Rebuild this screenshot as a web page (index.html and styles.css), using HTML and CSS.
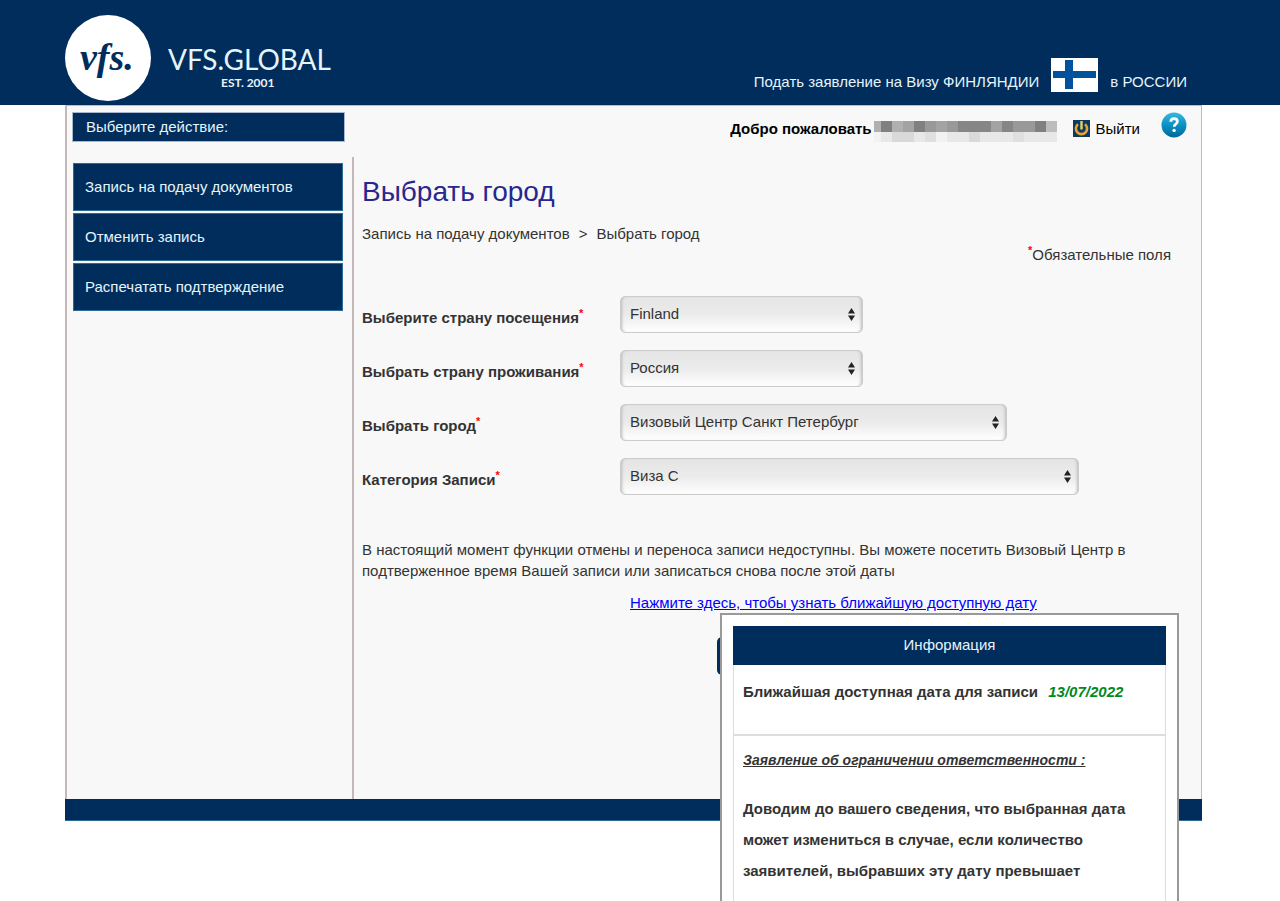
FILE: index.html
```html
<!DOCTYPE html>
<html lang="ru">
<head>
<meta charset="utf-8">
<title>VFS.GLOBAL</title>
<meta name="viewport" content="width=device-width, initial-scale=1">
<link rel="stylesheet" href="styles.css">
</head>
<body>
<div class="page">
  <header class="header">
    <svg class="logo" width="280" height="90" viewBox="0 0 280 90" role="img" aria-label="VFS.GLOBAL EST. 2001">
      <circle cx="43" cy="44" r="43" fill="#fff"/>
      <text class="logo-script" x="15" y="56">vfs.</text>
      <text class="logo-name" x="103" y="56">VFS.GLOBAL</text>
      <text class="logo-est" x="156" y="73">EST. 2001</text>
    </svg>
    <div class="mission">
      <span>Подать заявление на Визу ФИНЛЯНДИИ</span>
      <svg width="47" height="34" viewBox="0 0 47 34" aria-hidden="true">
        <path fill="#fff" d="M0 0h47v34H0z"/>
        <path fill="#00529c" d="M14 2h8v11h23v7H22v11h-8V20H2v-7h12z"/>
      </svg>
      <span>в РОССИИ</span>
    </div>
  </header>

  <div class="panel">
    <div class="topbar">
      <div class="action-title">Выберите действие:</div>
      <div class="user">
        <strong class="welcome">Добро пожаловать</strong>
        <svg class="user-name" width="183" height="21" viewBox="0 0 183 21" shape-rendering="crispEdges" aria-hidden="true">
          <path fill="#b0b0b0" d="M0 0h183v11H0z"/>
          <path fill="#e8e8e8" d="M0 11h183v10H0z"/>
          <path fill="#808080" d="M7 0h11v11H7zM40 0h11v11H40zM161 0h11v11h-11z"/>
          <path fill="#868686" d="M84 0h33v11H84zM128 0h11v11h-11z"/>
          <path fill="#999" d="M51 0h11v11H51zM73 0h11v11H73zM139 0h22v11h-22z"/>
          <path fill="#a3a3a3" d="M29 0h11v11H29zM62 0h11v11H62zM117 0h11v11h-11z"/>
          <path fill="#bdbdbd" d="M172 0h11v11h-11z"/>
          <path fill="#d9d9d9" d="M18 11h22v10H18zM95 11h11v10H95z"/>
          <path fill="#f2f2f2" d="M0 11h7v10H0zM62 11h11v10H62z"/>
          <path fill="#dfdfdf" d="M51 11h11v10H51zM139 11h11v10h-11z"/>
        </svg>
        <a class="logout" href="#">
          <svg width="17" height="17" viewBox="0 0 17 17" aria-hidden="true">
            <path fill="#0d3b5c" d="M0 0h17v17H0z"/>
            <path d="M5 4.200A5.600 5.600 0 1 0 12 4.200" fill="none" stroke="#e8a33a" stroke-width="2.600"/>
            <path d="M8.500 1v8.500" stroke="#e9d35c" stroke-width="2.400"/>
          </svg>
          Выйти
        </a>
        <a class="help" href="#" aria-label="Помощь">
          <svg width="26" height="26" viewBox="0 0 26 26" aria-hidden="true">
            <defs>
              <linearGradient id="ball" x1="0" y1="0" x2="0" y2="1">
                <stop offset="0" stop-color="#35b8dc"/>
                <stop offset=".5" stop-color="#0a92c4"/>
                <stop offset="1" stop-color="#00659b"/>
              </linearGradient>
            </defs>
            <circle cx="13" cy="13" r="12.500" fill="url(#ball)"/>
            <path d="M9.800 9.800C9.800 7.600 11.200 6.600 13 6.600c2 0 3.400 1.100 3.400 2.900 0 2.400-3.200 2.600-3.200 5.200" fill="none" stroke="#fff" stroke-width="2.700"/>
            <circle cx="13.100" cy="18.400" r="1.700" fill="#fff"/>
          </svg>
        </a>
      </div>
    </div>

    <div class="columns">
      <nav class="menu">
        <a href="#">Запись на подачу документов</a>
        <a href="#">Отменить запись</a>
        <a href="#">Распечатать подтверждение</a>
      </nav>
      <main class="content">
        <h1>Выбрать город</h1>
        <div class="crumbs"><span>Запись на подачу документов</span><span>&gt;</span><span>Выбрать город</span></div>
        <div class="required"><sup>*</sup>Обязательные поля</div>
        <form class="form">
          <label for="mission">Выберите страну посещения<sup>*</sup></label>
          <select id="mission" class="short"><option>Finland</option></select>
          <label for="country">Выбрать страну проживания<sup>*</sup></label>
          <select id="country" class="short"><option>Россия</option></select>
          <label for="city">Выбрать город<sup>*</sup></label>
          <select id="city" class="medium"><option>Визовый Центр Санкт Петербург</option></select>
          <label for="category">Категория Записи<sup>*</sup></label>
          <select id="category" class="long"><option>Виза C</option></select>
        </form>
        <p class="note">В настоящий момент функции отмены и переноса записи недоступны. Вы можете посетить Визовый Центр в подтверженное время Вашей записи или записаться снова после этой даты</p>
        <a class="nearest" href="#">Нажмите здесь, чтобы узнать ближайшую доступную дату</a>
        <button class="submit" type="button" aria-label="Продолжить"></button>
      </main>
    </div>
  </div>
  <footer class="footer"></footer>

  <aside class="popup" role="dialog" aria-labelledby="popup-title">
    <div class="popup-box">
      <h2 id="popup-title">Информация</h2>
      <div class="popup-date">Ближайшая доступная дата для записи <em>13/07/2022</em></div>
      <div class="popup-text">
        <h3>Заявление об ограничении ответственности :</h3>
        <p>Доводим до вашего сведения, что выбранная дата может измениться в случае, если количество заявителей, выбравших эту дату превышает</p>
      </div>
    </div>
  </aside>
</div>
</body>
</html>
```
FILE: styles.css
```css
* {
  box-sizing: border-box;
}

body {
  margin: 0;
  background: #fff;
  color: #333;
  font: 15px/21px "Liberation Sans", Arial, sans-serif;
}

.page {
  position: relative;
  min-height: 100vh;
  overflow: hidden;
}

.header {
  display: flex;
  justify-content: space-between;
  align-items: flex-start;
  height: 105px;
  padding: 14px 93px 0 65px;
  background: #002d5c;
  color: #e6f4fb;
}

.logo-script {
  font: italic bold 38px "Liberation Serif", serif;
  fill: #002d5c;
}

.logo-name {
  font: 28px Lato, sans-serif;
  fill: #e6f4fb;
}

.logo-est {
  font: bold 12px Lato, sans-serif;
  fill: #e6f4fb;
}

.mission {
  display: flex;
  align-items: flex-end;
  gap: 12px;
  padding-top: 44px;
}

.panel {
  display: flex;
  flex-direction: column;
  min-height: 694px;
  margin: 0 78px 0 65px;
  border: solid #c4b8b8;
  border-width: 1px 1px 0 2px;
  background: #f8f8f8;
}

.topbar {
  display: flex;
  justify-content: space-between;
  align-items: flex-start;
  height: 51px;
  padding: 6px 14px 0 5px;
}

.action-title {
  width: 273px;
  padding: 4px 13px;
  border: 1px solid #a9b8d0;
  background: #002d5c;
  color: #e6f4fb;
  line-height: 20px;
}

.user {
  display: flex;
  color: #000;
}

.welcome {
  padding-top: 6px;
}

.user-name {
  margin: 9px 16px 0 2px;
}

.logout {
  display: flex;
  gap: 6px;
  padding-top: 6px;
  color: #000;
  text-decoration: none;
}

.logout svg {
  margin-top: 2px;
}

.help {
  margin-left: 21px;
}

.columns {
  display: flex;
  flex: 1;
}

.menu {
  display: flex;
  flex-direction: column;
  gap: 2px;
  width: 287px;
  padding: 6px 9px 0 6px;
  border-right: 2px solid #c4b8b8;
}

.menu a {
  padding: 12px 11px 13px;
  border: 1px solid #2c6c94;
  background: #002d5c;
  color: #e6f4fb;
  text-decoration: none;
}

.content {
  display: flex;
  flex: 1;
  flex-direction: column;
  padding: 18px 30px 0 8px;
}

h1 {
  margin: 0;
  color: #27278f;
  font-size: 28px;
  font-weight: normal;
  line-height: 34px;
}

.crumbs {
  display: flex;
  gap: 9px;
  margin-top: 14px;
}

sup {
  color: #f00;
  font-size: 11px;
  font-weight: bold;
  line-height: 0;
}

.required {
  align-self: flex-end;
}

.form {
  display: grid;
  grid-template-columns: 249px 1fr;
  gap: 17px 9px;
  margin-top: 31px;
}

.form label {
  padding-top: 11px;
  font-weight: bold;
}

select {
  height: 37px;
  padding: 0 24px 2px 9px;
  border: 1px solid #ccc;
  border-radius: 5px;
  appearance: none;
  background:
    url("data:image/svg+xml,%3Csvg xmlns='http://www.w3.org/2000/svg' width='7' height='13'%3E%3Cpath fill='%23222' d='M3.5 0L7 5.500H0zM0 7.500h7L3.500 13z'/%3E%3C/svg%3E") no-repeat right 7px center,
    linear-gradient(#e5e5e5, #ebebeb 50%, #fff);
  box-shadow: inset 3px 0 3px -2px #bbb, inset -3px 0 3px -2px #bbb;
  color: #333;
  font: inherit;
}

.short {
  width: 243px;
}

.medium {
  width: 387px;
}

.long {
  width: 459px;
}

.note {
  margin: 44px 0 11px;
}

.nearest {
  margin-left: 268px;
  color: #00f;
}

.submit {
  width: 108px;
  height: 38px;
  margin: 24px 0 0 355px;
  border: 0;
  border-radius: 5px;
  background: #002d5c;
}

.footer {
  height: 22px;
  margin: 0 78px 0 65px;
  border-bottom: 1px solid #2c6c94;
  background: #002d5c;
}

.popup {
  position: absolute;
  top: 613px;
  right: 101px;
  width: 459px;
  padding: 11px;
  border: 2px solid #999;
  background: #fff;
}

.popup-box {
  min-height: 300px;
  border: 1px solid #ddd;
  border-top: 0;
  font-weight: bold;
}

.popup h2 {
  margin: 0 -1px;
  padding: 8px 9px 10px;
  background: #002d5c;
  color: #e6f4fb;
  font-size: 15px;
  font-weight: normal;
  line-height: 21px;
  text-align: center;
}

.popup-date {
  height: 71px;
  padding: 16px 9px;
  border-bottom: 2px solid #ddd;
}

.popup-date em {
  margin-left: 6px;
  color: #008a1c;
}

.popup-text {
  padding: 14px 9px;
}

.popup h3 {
  margin: 0 0 22px;
  font-size: 14px;
  font-style: italic;
  text-decoration: underline;
}

.popup p {
  margin: 0;
  line-height: 31px;
}
```
